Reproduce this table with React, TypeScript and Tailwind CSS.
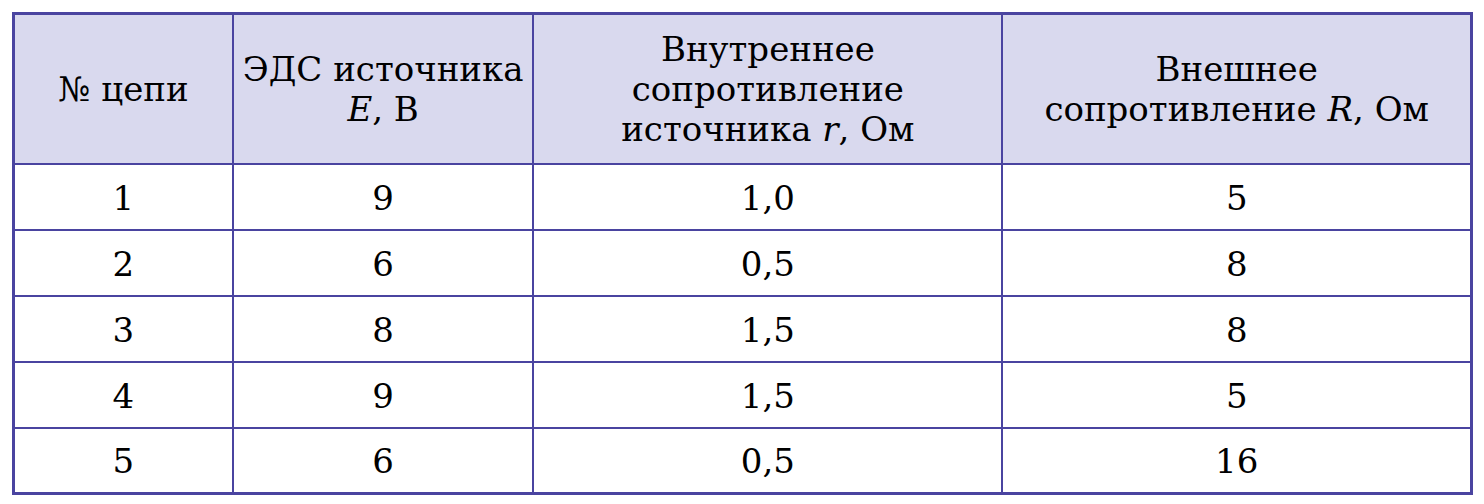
const rows = [
  ["1", "9", "1,0", "5"],
  ["2", "6", "0,5", "8"],
  ["3", "8", "1,5", "8"],
  ["4", "9", "1,5", "5"],
  ["5", "6", "0,5", "16"],
];

export default function App() {
  return (
    <div className="bg-white w-[1484px] h-[504px] pt-[12px] pl-[12px] font-['DejaVu_Serif',serif] text-black">
      <table className="border-collapse border-[3px] border-[#4a44a0] w-[1461px] text-[34px] leading-[40px] text-center">
        <colgroup>
          <col className="w-[220px]" />
          <col className="w-[301px]" />
          <col className="w-[470px]" />
          <col className="w-[470px]" />
        </colgroup>
        <thead>
          <tr className="bg-[#d9d9ee] h-[150px]">
            <th className="border-2 border-[#4a44a0] font-normal">№ цепи</th>
            <th className="border-2 border-[#4a44a0] font-normal">
              ЭДС источника
              <br />
              <i>E</i>, В
            </th>
            <th className="border-2 border-[#4a44a0] font-normal">
              Внутреннее
              <br />
              сопротивление
              <br />
              источника <i>r</i>, Ом
            </th>
            <th className="border-2 border-[#4a44a0] font-normal">
              Внешнее
              <br />
              сопротивление <i>R</i>, Ом
            </th>
          </tr>
        </thead>
        <tbody>
          {rows.map((r) => (
            <tr key={r[0]} className="h-[66px]">
              {r.map((c, i) => (
                <td key={i} className="border-2 border-[#4a44a0] pt-[2px]">
                  {c}
                </td>
              ))}
            </tr>
          ))}
        </tbody>
      </table>
    </div>
  );
}
